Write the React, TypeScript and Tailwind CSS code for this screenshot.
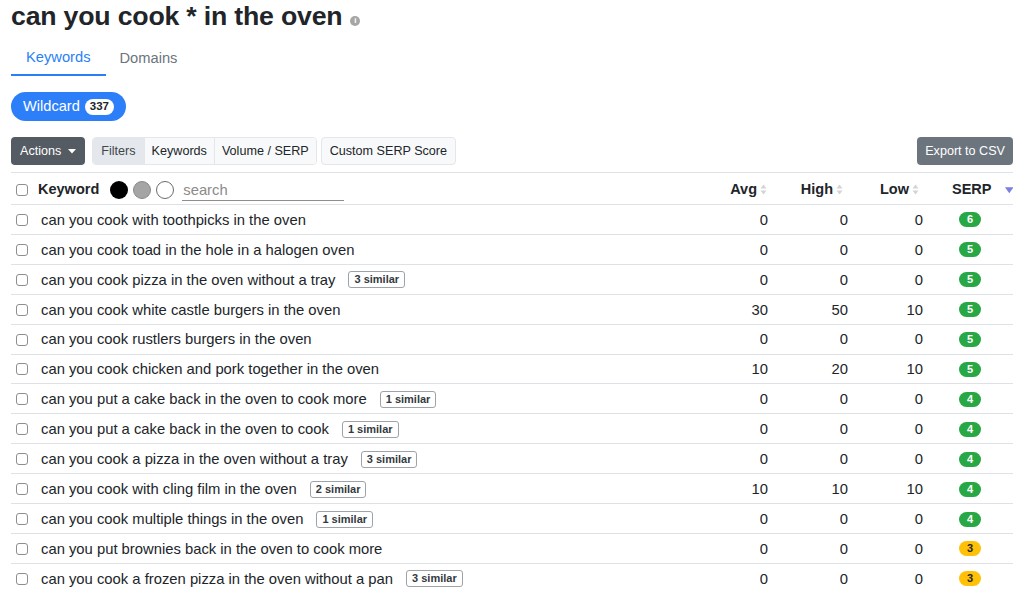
import React from "react";

type Row = {
  kw: string;
  similar?: number;
  avg: number;
  high: number;
  low: number;
  serp: number;
};

const rows: Row[] = [
  { kw: "can you cook with toothpicks in the oven", avg: 0, high: 0, low: 0, serp: 6 },
  { kw: "can you cook toad in the hole in a halogen oven", avg: 0, high: 0, low: 0, serp: 5 },
  { kw: "can you cook pizza in the oven without a tray", similar: 3, avg: 0, high: 0, low: 0, serp: 5 },
  { kw: "can you cook white castle burgers in the oven", avg: 30, high: 50, low: 10, serp: 5 },
  { kw: "can you cook rustlers burgers in the oven", avg: 0, high: 0, low: 0, serp: 5 },
  { kw: "can you cook chicken and pork together in the oven", avg: 10, high: 20, low: 10, serp: 5 },
  { kw: "can you put a cake back in the oven to cook more", similar: 1, avg: 0, high: 0, low: 0, serp: 4 },
  { kw: "can you put a cake back in the oven to cook", similar: 1, avg: 0, high: 0, low: 0, serp: 4 },
  { kw: "can you cook a pizza in the oven without a tray", similar: 3, avg: 0, high: 0, low: 0, serp: 4 },
  { kw: "can you cook with cling film in the oven", similar: 2, avg: 10, high: 10, low: 10, serp: 4 },
  { kw: "can you cook multiple things in the oven", similar: 1, avg: 0, high: 0, low: 0, serp: 4 },
  { kw: "can you put brownies back in the oven to cook more", avg: 0, high: 0, low: 0, serp: 3 },
  { kw: "can you cook a frozen pizza in the oven without a pan", similar: 3, avg: 0, high: 0, low: 0, serp: 3 },
];

const Check = () => (
  <span className="inline-block w-[12px] h-[12px] rounded-[3px] border border-[#8e8e8e] bg-white shrink-0" />
);

const SortIcon = () => (
  <svg width="7" height="11" viewBox="0 0 7 11" className="ml-[3px]">
    <path d="M3.5 0.5 L6.5 4.5 L0.5 4.5 Z" fill="#d4d4d4" />
    <path d="M3.5 10.5 L6.5 6.5 L0.5 6.5 Z" fill="#d4d4d4" />
  </svg>
);

const SerpBadge = ({ n }: { n: number }) => (
  <span
    className={
      n >= 4
        ? "inline-flex items-center justify-center w-[22px] h-[15px] rounded-full bg-[#28a745] text-white text-[11px] font-bold leading-none"
        : "inline-flex items-center justify-center w-[22px] h-[15px] rounded-full bg-[#ffc107] text-[#212529] text-[11px] font-bold leading-none"
    }
  >
    {n}
  </span>
);

export default function App() {
  return (
    <div
      className="w-[1024px] h-[591px] overflow-hidden bg-white px-[11px] text-[#212529]"
      style={{ fontFamily: '"Liberation Sans", Arial, sans-serif' }}
    >
      <div className="flex items-end h-[32px]">
        <h1 className="text-[26.7px] leading-[32px] font-bold tracking-[-0.2px]">can you cook * in the oven</h1>
        <span className="ml-[8px] mb-[6px] inline-flex items-center justify-center w-[10px] h-[10px] rounded-full bg-[#a6a6a6] text-white text-[8px] font-bold leading-none">
          i
        </span>
      </div>

      <div className="flex mt-[6px] text-[14.7px]">
        <div className="px-[15px] h-[38px] pt-[2px] flex items-center text-[#2a7ff6] border-b-2 border-[#2a7ff6]">Keywords</div>
        <div className="px-[14px] h-[38px] pt-[2px] flex items-center text-[#6c757d]">Domains</div>
      </div>

      <div className="mt-[16px] flex">
        <div className="h-[29px] px-[12px] rounded-full bg-[#2d7ff9] text-white text-[14.6px] flex items-center">
          Wildcard
          <span className="ml-[5px] h-[16px] px-[5px] rounded-full bg-white text-[#212529] text-[11.5px] font-bold flex items-center">
            337
          </span>
        </div>
      </div>

      <div className="mt-[16px] flex items-center text-[12.6px]">
        <div className="h-[28px] px-[9px] rounded-[4px] bg-[#545b62] text-white flex items-center">
          Actions
          <svg width="8" height="5" viewBox="0 0 8 5" className="ml-[7px]">
            <path d="M0 0 L8 0 L4 4.5 Z" fill="#ffffff" />
          </svg>
        </div>
        <div className="ml-[7px] flex h-[28px] rounded-[4px] border border-[#e3e6ea] overflow-hidden">
          <div className="px-[8px] flex items-center bg-[#e4e8ec] text-[#3f464d]">Filters</div>
          <div className="px-[7px] flex items-center bg-[#f8f9fa] border-l border-[#e3e6ea]">Keywords</div>
          <div className="px-[7px] flex items-center bg-[#f8f9fa] border-l border-[#e3e6ea]">Volume / SERP</div>
        </div>
        <div className="ml-[4px] h-[28px] px-[8px] flex items-center rounded-[4px] bg-[#f8f9fa] border border-[#e3e6ea]">
          Custom SERP Score
        </div>
        <div className="ml-auto h-[28px] px-[8px] flex items-center rounded-[4px] bg-[#6c757d] text-white">
          Export to CSV
        </div>
      </div>

      <div className="mt-[7px] border-t border-[#dee2e6]">
        <div className="grid grid-cols-[1fr_80px_80px_76px_89px] h-[32px] pt-[2px] border-b border-[#dee2e6] text-[14.5px] font-bold">
          <div className="flex items-center pl-[5px]">
            <Check />
            <span className="ml-[10px]">Keyword</span>
            <span className="ml-[11px] w-[18px] h-[18px] rounded-full bg-black" />
            <span className="ml-[5px] w-[18px] h-[18px] rounded-full bg-[#a5a5a5] border border-[#8a8a8a]" />
            <span className="ml-[5px] w-[18px] h-[18px] rounded-full bg-white border border-[#6b6b6b]" />
            <span className="ml-[8px] w-[162px] h-[22px] border-b border-[#8e8e8e] font-normal text-[#8b8b8b] text-[14.8px] leading-[22px] pl-[1px]">
              search
            </span>
          </div>
          <div className="flex items-center justify-end pr-[1px]">
            Avg
            <SortIcon />
          </div>
          <div className="flex items-center justify-end pr-[5px]">
            High
            <SortIcon />
          </div>
          <div className="flex items-center justify-end pr-[5px]">
            Low
            <SortIcon />
          </div>
          <div className="flex items-center pl-[28px]">
            SERP
            <svg width="9" height="7" viewBox="0 0 9 7" className="ml-[13px] mt-[2px]">
              <path d="M0 0 L9 0 L4.5 6.5 Z" fill="#7b7fe0" />
            </svg>
          </div>
        </div>

        {rows.map((r, i) => (
          <div
            key={i}
            className="grid grid-cols-[1fr_80px_80px_76px_89px] h-[29.92px] pt-[1px] border-b border-[#dee2e6] text-[14.8px] items-center"
          >
            <div className="flex items-center pl-[5px]">
              <Check />
              <span className="ml-[13px]">{r.kw}</span>
              {r.similar && (
                <span className="ml-[13px] h-[17px] px-[5px] rounded-[3px] border border-[#9da3a8] text-[11px] font-bold text-[#343a40] flex items-center leading-none">
                  {r.similar} similar
                </span>
              )}
            </div>
            <div className="text-right">{r.avg}</div>
            <div className="text-right">{r.high}</div>
            <div className="text-right pr-[1px]">{r.low}</div>
            <div className="flex pl-[35px]">
              <SerpBadge n={r.serp} />
            </div>
          </div>
        ))}
      </div>
    </div>
  );
}
